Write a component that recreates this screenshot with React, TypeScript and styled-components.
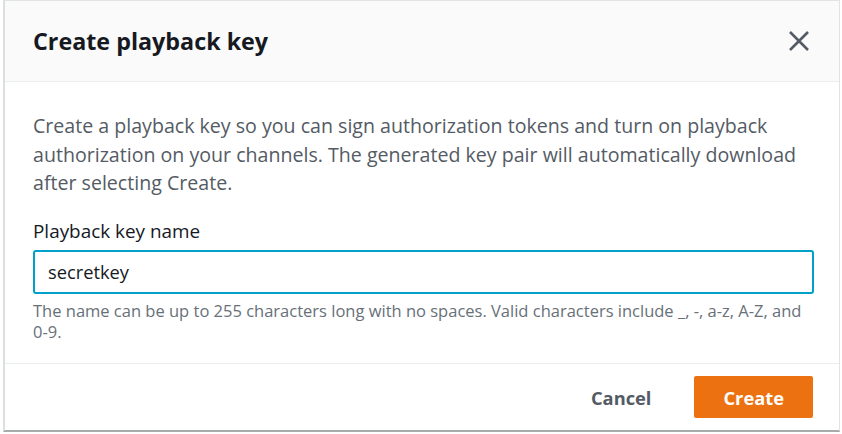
import React from 'react';
import styled, { createGlobalStyle } from 'styled-components';

const GlobalStyle = createGlobalStyle`
	html, body {
		margin: 0;
		padding: 0;
		background: #ffffff;
	}
	body {
		font-family: "Open Sans", "Noto Sans", Arial, sans-serif;
		color: #16191f;
	}
`;

const Page = styled.div`
	width: 842px;
	height: 434px;
	padding: 0 2px 2px 3px;
	box-sizing: border-box;
`;

const Dialog = styled.div`
	height: 100%;
	display: flex;
	flex-direction: column;
	background: #ffffff;
	border: 1px solid #e1e4e4;
	border-left: 2px solid #dcdfdf;
	border-bottom: 2px solid #a7abab;
	box-sizing: border-box;
`;

const Header = styled.div`
	height: 81px;
	display: flex;
	align-items: center;
	justify-content: space-between;
	padding: 0 25px 0 28px;
	background: #fafafa;
	border-bottom: 1px solid #eaeded;
	box-sizing: border-box;
`;

const Title = styled.h2`
	margin: 0;
	font-size: 23.3px;
	font-weight: 700;
	color: #16191f;
`;

const CloseButton = styled.button`
	border: none;
	background: none;
	padding: 0;
	width: 30px;
	height: 30px;
	display: flex;
	align-items: center;
	justify-content: center;
	cursor: pointer;
`;

const Body = styled.div`
	flex: 1;
	padding: 30px 28px 0 28px;
	border-bottom: 1px solid #eaeded;
`;

const Intro = styled.p`
	margin: 0 0 20px 0;
	font-size: 19.6px;
	line-height: 28.5px;
	color: #545b64;
`;

const Label = styled.label`
	display: block;
	font-size: 18.9px;
	line-height: 26px;
	color: #16191f;
	margin-bottom: 6px;
`;

const Input = styled.input`
	display: block;
	width: 781px;
	height: 44px;
	box-sizing: border-box;
	border: 2px solid #00a1c9;
	border-radius: 3px;
	padding: 0 13px;
	font-family: inherit;
	font-size: 18.3px;
	color: #16191f;
	outline: none;
	caret-color: #16191f;
`;

const Hint = styled.div`
	margin-top: 6px;
	font-size: 16.5px;
	line-height: 21px;
	color: #687078;
`;

const NoBreak = styled.span`
	white-space: nowrap;
`;

const Footer = styled.div`
	height: 66px;
	display: flex;
	align-items: center;
	justify-content: flex-end;
	gap: 22px;
	padding: 0 26px 0 0;
	box-sizing: border-box;
`;

const Button = styled.button<{ $primary?: boolean }>`
	height: 42px;
	padding: 0 ${p => (p.$primary ? '29px' : '21px')};
	border-radius: 2px;
	border: none;
	font-family: inherit;
	font-size: 18.3px;
	font-weight: 700;
	cursor: pointer;
	background: ${p => (p.$primary ? '#ec7211' : 'transparent')};
	color: ${p => (p.$primary ? '#ffffff' : '#545b64')};
`;

const CloseIcon = () => (
	<svg width="24" height="24" viewBox="0 0 24 24">
		<path
			d="M3 3 L21 21 M21 3 L3 21"
			stroke="#545b64"
			strokeWidth="2.6"
			fill="none"
		/>
	</svg>
);

const App: React.FunctionComponent<{}> = () => {
	return (
		<Page>
			<GlobalStyle />
			<Dialog>
				<Header>
					<Title>Create playback key</Title>
					<CloseButton aria-label="Close">
						<CloseIcon />
					</CloseButton>
				</Header>
				<Body>
					<Intro>
						Create a playback key so you can sign authorization tokens
						and turn on playback authorization on your channels. The
						generated key pair will automatically download after
						selecting Create.
					</Intro>
					<Label htmlFor="key-name">Playback key name</Label>
					<Input id="key-name" defaultValue="secretkey" autoFocus />
					<Hint>
						The name can be up to 255 characters long with no spaces.
						Valid characters include _, -, a-z, A-Z, and{' '}
						<NoBreak>0-9.</NoBreak>
					</Hint>
				</Body>
				<Footer>
					<Button>Cancel</Button>
					<Button $primary>Create</Button>
				</Footer>
			</Dialog>
		</Page>
	);
};

export default App;
